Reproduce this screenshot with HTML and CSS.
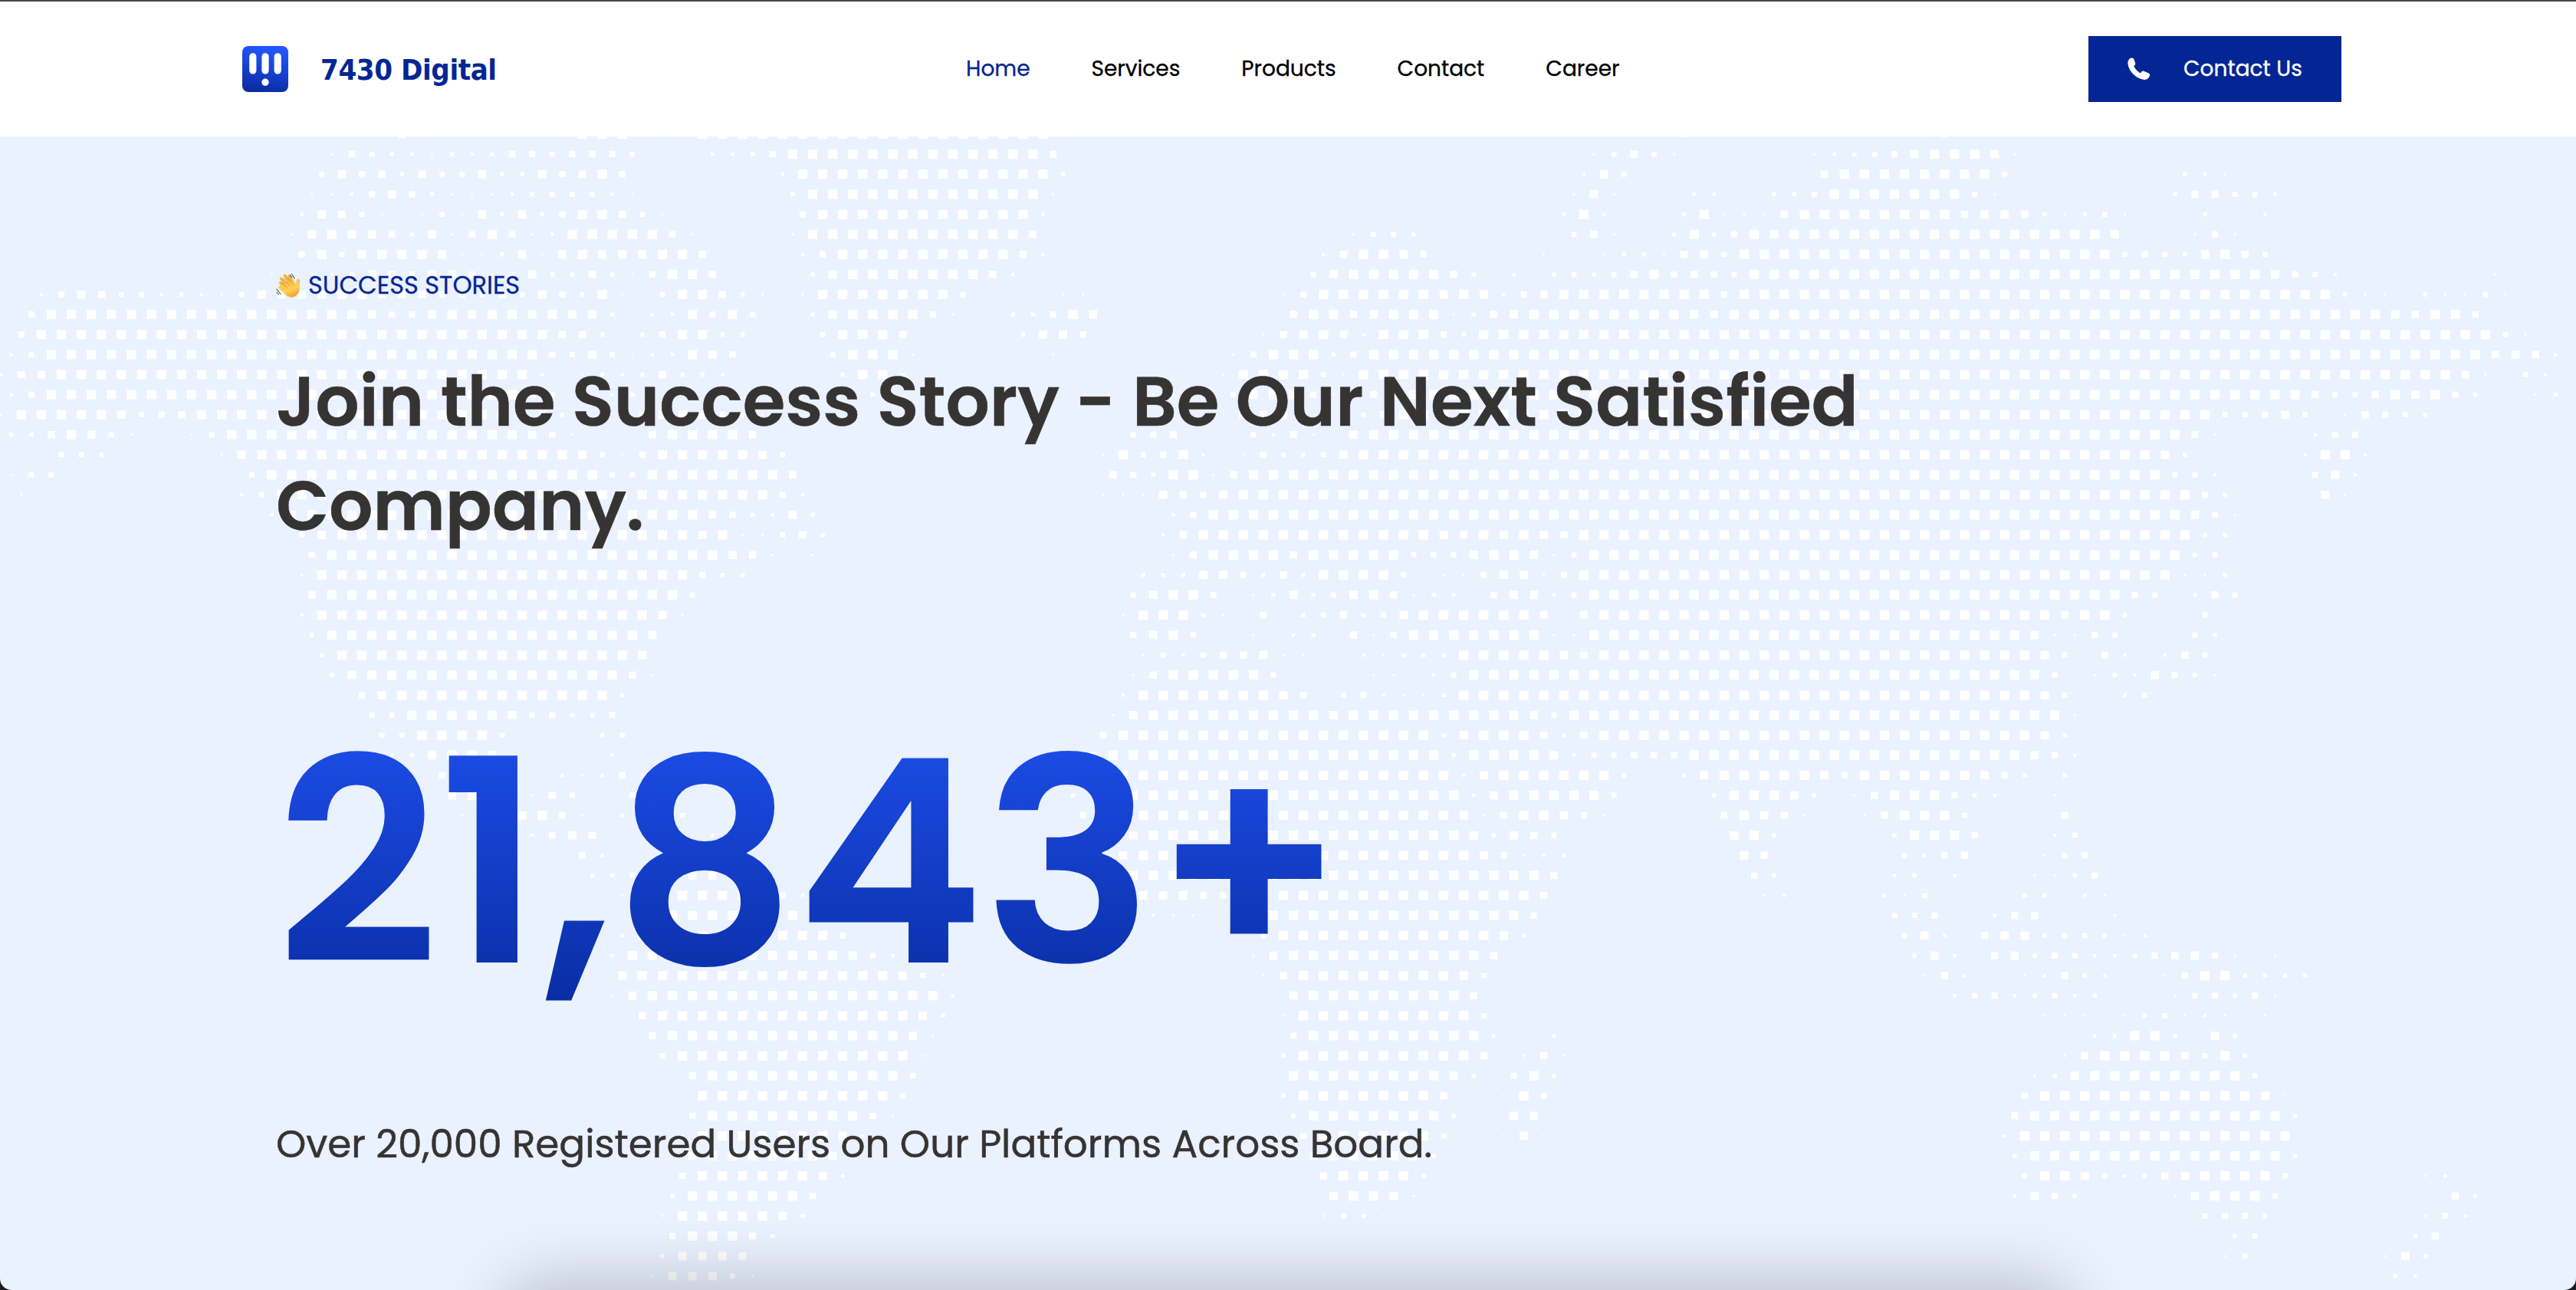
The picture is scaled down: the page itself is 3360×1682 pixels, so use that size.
FILE: index.html
```html
<!DOCTYPE html>
<html lang="en">
<head>
<meta charset="utf-8">
<title>7430 Digital</title>
<link rel="stylesheet" href="styles.css">
</head>
<body>
<header class="header">
  <a class="brand">
    <svg class="brand-icon" viewBox="0 0 60 60" aria-hidden="true">
      <defs>
        <linearGradient id="brandFill" x1="0.6" y1="0" x2="0.4" y2="1">
          <stop offset="0.05" stop-color="#2356ff"/>
          <stop offset="1" stop-color="#0a2ca0"/>
        </linearGradient>
      </defs>
      <rect width="60" height="60" rx="8" fill="url(#brandFill)"/>
      <g fill="#fff">
        <rect x="9.2" y="9.2" width="9.2" height="27.4" rx="4.6"/>
        <rect x="25.4" y="9.2" width="9.2" height="27.4" rx="4.6"/>
        <rect x="41.6" y="9.2" width="9.2" height="27.4" rx="4.6"/>
        <circle cx="30" cy="47.3" r="4.7"/>
      </g>
    </svg>
    <span class="brand-name">7430 Digital</span>
  </a>
  <nav class="nav">
    <a class="nav-link nav-link-active">Home</a>
    <a class="nav-link">Services</a>
    <a class="nav-link">Products</a>
    <a class="nav-link">Contact</a>
    <a class="nav-link">Career</a>
  </nav>
  <a class="cta">
    <svg class="cta-icon" viewBox="0 0 30 30" aria-hidden="true">
      <path fill="#fff" d="M4.200.8C6.200-.1 7.900.6 8.500 2.500L10.200 7.200c.4 1.200.1 2.100-.9 2.900L8.300 11.300c1.800 3.900 4.700 7 8.600 9.100l1.500-1.900c.8-.9 1.700-1.200 2.900-.7l5.900 2.500c1.700.7 2.300 2.200 1.600 4C27.300 28 24.400 29.500 20.800 28.700 10.400 26.600 2 18.400.5 8.400.1 5 1.300 2 4.200.8z"/>
    </svg>
    <span class="cta-label">Contact Us</span>
  </a>
</header>
<main class="hero">
  <svg class="map" viewBox="0 0 3360 1504" aria-hidden="true"><path id="mapDots" fill="#fff"/></svg>
  <section class="story">
    <p class="eyebrow">
      <svg class="wave" viewBox="0 0 32 32" aria-hidden="true">
        <defs>
          <linearGradient id="skin" x1="0" y1="0" x2="0.5" y2="1">
            <stop offset="0" stop-color="#f3b63c"/>
            <stop offset="0.7" stop-color="#ffcf58"/>
            <stop offset="1" stop-color="#f0a83a"/>
          </linearGradient>
        </defs>
        <g fill="none" stroke="#f0b442" stroke-width="4" stroke-linecap="round">
          <path d="M6 13l10 10"/><path d="M7 7.500l11 13"/><path d="M11.500 3.500l9 13"/><path d="M17.500 4l6 12"/>
        </g>
        <path fill="url(#skin)" d="M5 17c-2 0-2 2-1 3l8 8c4 4 10 5 15 1 4-4 4-9 4-14 0-3 1-6-1-7-3-1-3.500 2-4 6l-7-4z"/>
        <path fill="none" stroke="#cf8d28" stroke-width=".8" d="M7.500 12l7.500 8M10 7l8 10M15 5l6.500 10"/>
        <path fill="none" stroke="#4b4b4b" stroke-width="1.100" stroke-linecap="round" d="M20.500 1l3.500 6M18.500 2.500l2 3M1 21l5 6.500M1 25l2.500 3"/>
      </svg>
      <span class="eyebrow-text">SUCCESS STORIES</span>
    </p>
    <h1 class="title">Join the Success Story - Be Our Next Satisfied Company.</h1>
    <p class="count">21,843+</p>
    <p class="caption">Over 20,000 Registered Users on Our Platforms Across Board.</p>
  </section>
  <div class="dock-shadow"></div>
</main>
<script src="map.js"></script>
</body>
</html>
```
FILE: styles.css
```css
* { box-sizing: border-box; }

body {
  margin: 0;
  width: 3360px;
  height: 1682px;
  overflow: hidden;
  display: flex;
  flex-direction: column;
  background: #1c1c22;
  font-family: Poppins, Inter, sans-serif;
}

p, h1 { margin: 0; }

.header {
  flex: none;
  height: 178px;
  border-top: 2px solid #4d454f;
  background: #fff;
  padding: 0 306px 0 316px;
  display: grid;
  grid-template-columns: 943px 1465px 330px;
  align-items: center;
}

.brand { display: flex; align-items: center; gap: 42px; }
.brand-icon { width: 60px; height: 60px; }
.brand-name {
  padding-top: 2px;
  font-family: "DejaVu Sans Condensed", "DejaVu Sans", sans-serif;
  font-stretch: condensed;
  font-weight: 700;
  font-size: 38px;
  line-height: 60px;
  letter-spacing: -0.4px;
  color: #042694;
  white-space: nowrap;
}

.nav { display: flex; gap: 80px; padding-left: 1px; }
.nav-link {
  font-size: 28px;
  line-height: 40px;
  color: #000;
  white-space: nowrap;
  -webkit-text-stroke: 0.3px currentColor;
}
.nav-link-active { color: #042694; }

.cta {
  height: 86px;
  background: #042694;
  color: #fff;
  display: flex;
  align-items: center;
  padding-left: 51px;
  gap: 43px;
}
.cta-icon { width: 30px; height: 30px; }
.cta-label {
  font-size: 28px;
  line-height: 40px;
  white-space: nowrap;
  -webkit-text-stroke: 0.3px currentColor;
}

.hero {
  flex: 1;
  position: relative;
  overflow: hidden;
  background: #eaf1ff;
  border-radius: 0 0 15px 15px;
}

.map { position: absolute; inset: 0; width: 3360px; height: 1504px; }

.story { position: relative; padding: 170px 0 0 360px; }

.eyebrow { display: flex; align-items: center; gap: 10px; height: 48px; color: #042694; }
.wave { width: 32px; height: 32px; }
.eyebrow-text { font-size: 32px; line-height: 48px; white-space: nowrap; -webkit-text-stroke: 0.3px currentColor; }

.title {
  margin-top: 60px;
  width: 2200px;
  font-weight: 600;
  font-size: 90px;
  line-height: 136px;
  color: #363333;
  -webkit-text-stroke: 0.5px currentColor;
}

.count {
  margin-top: 173px;
  width: 1500px;
  height: 450px;
  font-weight: 600;
  font-size: 370px;
  line-height: 450px;
  color: transparent;
  background: linear-gradient(#2052f3, #042694 108%);
  -webkit-background-clip: text;
  background-clip: text;
}

.caption {
  margin-top: 105px;
  font-size: 50px;
  line-height: 72px;
  font-weight: 400;
  color: #363333;
  white-space: nowrap;
  -webkit-text-stroke: 0.5px currentColor;
}

.dock-shadow {
  position: absolute;
  left: 670px;
  top: 1508px;
  width: 2020px;
  height: 80px;
  border-radius: 30px;
  box-shadow: 0 0 90px 10px rgba(0, 0, 0, 0.24);
}
```
FILE: map.js
```js
// World map as a staggered halftone grid. Each line is one row of squares:
// "a-b" is a run of full squares, "c:digits" gives sizes 0-9 from column c on.
const rows = `20:7 29-31 34:5 35-52 84:6 96:56
16:2654324346656665 34:13346 39-51 52:7 79:25752 90:234568 96-98 99:82
16:5867475584486796 39:3 40-52 53:4 79:385 91:7 92-99 100:5 108:1432
15:22368642223455532 39:4 40-51 52:2 78:282 84:33 88:445 91-97 98:521 108:477553
15:387521252848469975 33:2 40:6 41-51 52:3 78:393 84:492227 90-97 98:788742452 110:41131
14:28988648269623 28-32 33:62 39:2 40-50 51:7 67:2554 78:572 83:494698 89-104 105:81 109:262
15:69589998224828988 32:89971 40:36 42-50 51:73 66:3799861 77:2112442785 87-105 106:565489751
3:1 13:2323587688635844742 32:6997 40:48 42-48 49:73 65:5899999741314545796765 87-112 113:8653 123:12
2:3687553432588 15:8899777665 25:75864921 33:599742 40:2 41-47 48:51 51:1 53:221 64:26 66-71 72:898367 78-85 86:6 87-116 117:422142252
0:16 2-17 18:8668989989884 32:339695 40:48 42-44 45:962 50:446981 63:1799789992478 76-83 84:87 86-118 119:879961
1:6 2-27 28:774 32:469944 41:5 42-44 45:7 51:48861 63:27897399964 74-124 125:52
0:35 2-26 27:6585233986 41:5 42-44 45:2 51:121 61:2699946 68-123 124:7873
0:377 3-26 27:3024347443 42:4994 61:2999952 68-122 123:721531
0:36 2-25 26:75 30:345 43:4 57:24 61:58996277 69-113 114:9755798964 126:241
0:2 1-5 6:8567 10-26 27:64 32:6888642 58:3 61:188765147 70-109 110:9556850276541
0:4479852 9:25 11-25 26:862 32:7 33-36 37:71 55:1567100537218 68-107 108:972 115:366
2:1554 11:28 13-28 29:8526 33-37 38:85 55:2956930264458 68-107 108:84 115:3993
0:2551 11:15 13-29 30:55 32-38 39:7 55:7649927 62-107 108:553 115:683
1:2 12:35 14-38 39:63 55:2228768 62-109 110:64 115:182
13:38 15-34 35:764384 57:136 60-108 109:862 115:11
14:158 17-34 35:8922574 58:37 60-71 72:8798987 79-109 110:44
15:6 16-35 36:87202 58:27 60-63 64:7 65-68 69:9565899825 79-108 109:45
15:2 16-34 35:6441 56:14448864749 67-69 70:502268826 79-108 109:2241
15:7 16-33 34:5 56:58996024845897243168835 79-105 106:651375
15:3 16-32 33:82 56:299942160457458 71-76 77:717 80-102 103:7994 109:151
15:4 16-31 32:81 56:68950121341726 70-76 77:22 79-100 101:82265 109:54
16:4 17-31 32:81 56:12535778220132444 73-77 78:87 80-101 102:850631375
16:48 18-30 31:72 56:27 58-62 63:51 67:122135 73-101 102:502438642
18:68 20-30 31:4 56:3 57-63 64:861563224 73-101 102:85 106:451
18:55 20-24 25:856446 55:28 57-65 66:8 67-75 76:85 78-102 103:2 106:1
18:155 21-24 25:5 30:45 55:6 56-71 72:48 74-76 77:737 80-101 102:84
19:3489981 30:31 54:6 55-71 72:4 73-76 77:8355666 84-100 101:863
21:1699 27:132362 54:8 55-72 73:38 75-80 81:4 84:38 86-90 91:86 93-98 99:86414
21:1898 26:275 31:6 53:4 56-72 73:38 75-79 80:5 84:1499984027 94-96 97:643 102:21
23:2 25:8896213 34:5 54:6 55-72 73:82799862 86:69872 93:27 95-97 98:51 102:17
26:3687 34:23 53:4 56:8 57-72 73:848751 85:1894 93:149996 102:351
28:163 38:1 56:8 57-73 74:86233 86:187 95:53671 102:2561
29:445 34:8899 56-76 77:71 86:164 94:34031 101:2246
31:2 32-38 39:63 57:88866 62-76 77:71 88:23 94:3251 101:44132
32-39 57:322 63-75 76:6 93:1556013771012
31:38 33-41 42:6 63:5 64-74 75:83 95:583178845542311
30:3 31-41 42:853 62:28 64-73 74:71 95:48317846533467862021
30:18 32-44 45:852 63:27 65-72 73:85 96:27311237431126994444
30:28 32-46 47:3 63:18 65-72 73:7 97:35634534100256462
31:17 33-45 46:84 64:2 65-73 74:5 102:222024523202
31:17 33-44 45:82 64:6 65-73 74:3013 104:34994084
32:15 34-45 46:2 64:4 65-73 74:70272 103:27 105-108 109:7594
33:17 35-44 45:5 63:1 64-71 72:841694 101:248 104-111 112:5
34:1 35-44 45:51 64:4 65-71 72:710296 100:16 102-112 113:82
34:6 35-42 43:62 64:4 65-71 72:401881 100:7 101-113 114:4
34:2 35-41 42:83 65:68 67-69 70:895 75:282 100:3 101-114 115:1
34:8 35-40 41:8 65:7 66-70 71:4 100:4 101-113 114:4
34:6 35-40 41:83 65:17 67-70 71:4 101:59985347899995 121:23
33:4 34-39 40:6 65:189982 100:38641 108:289995 121:173
33:2 34-38 39:84 66:2542 110:5664 121:263
33:6999741 111:45 119:147
33:48887 111:251 119:284
32:288852 119:43`.split("\n");

const pitch = 26.13;
let path = "";

function square(row, col, level) {
  if (!level) return;
  const size = level * 1.36;
  const x = 1.7 + pitch * (col + (row % 2) / 2) - size / 2;
  const y = -3 + 26.12 * row - size / 2;
  path += `M${x.toFixed(1)} ${y.toFixed(1)}h${size}v${size}h${-size}z`;
}

rows.forEach((line, row) => {
  line.split(" ").forEach((token) => {
    const run = token.match(/^(\d+)-(\d+)$/);
    if (run) {
      for (let c = +run[1]; c <= +run[2]; c++) square(row, c, 9);
      return;
    }
    const [start, sizes] = token.split(":");
    [...sizes].forEach((d, i) => square(row, +start + i, +d));
  });
});

document.getElementById("mapDots").setAttribute("d", path);
```
